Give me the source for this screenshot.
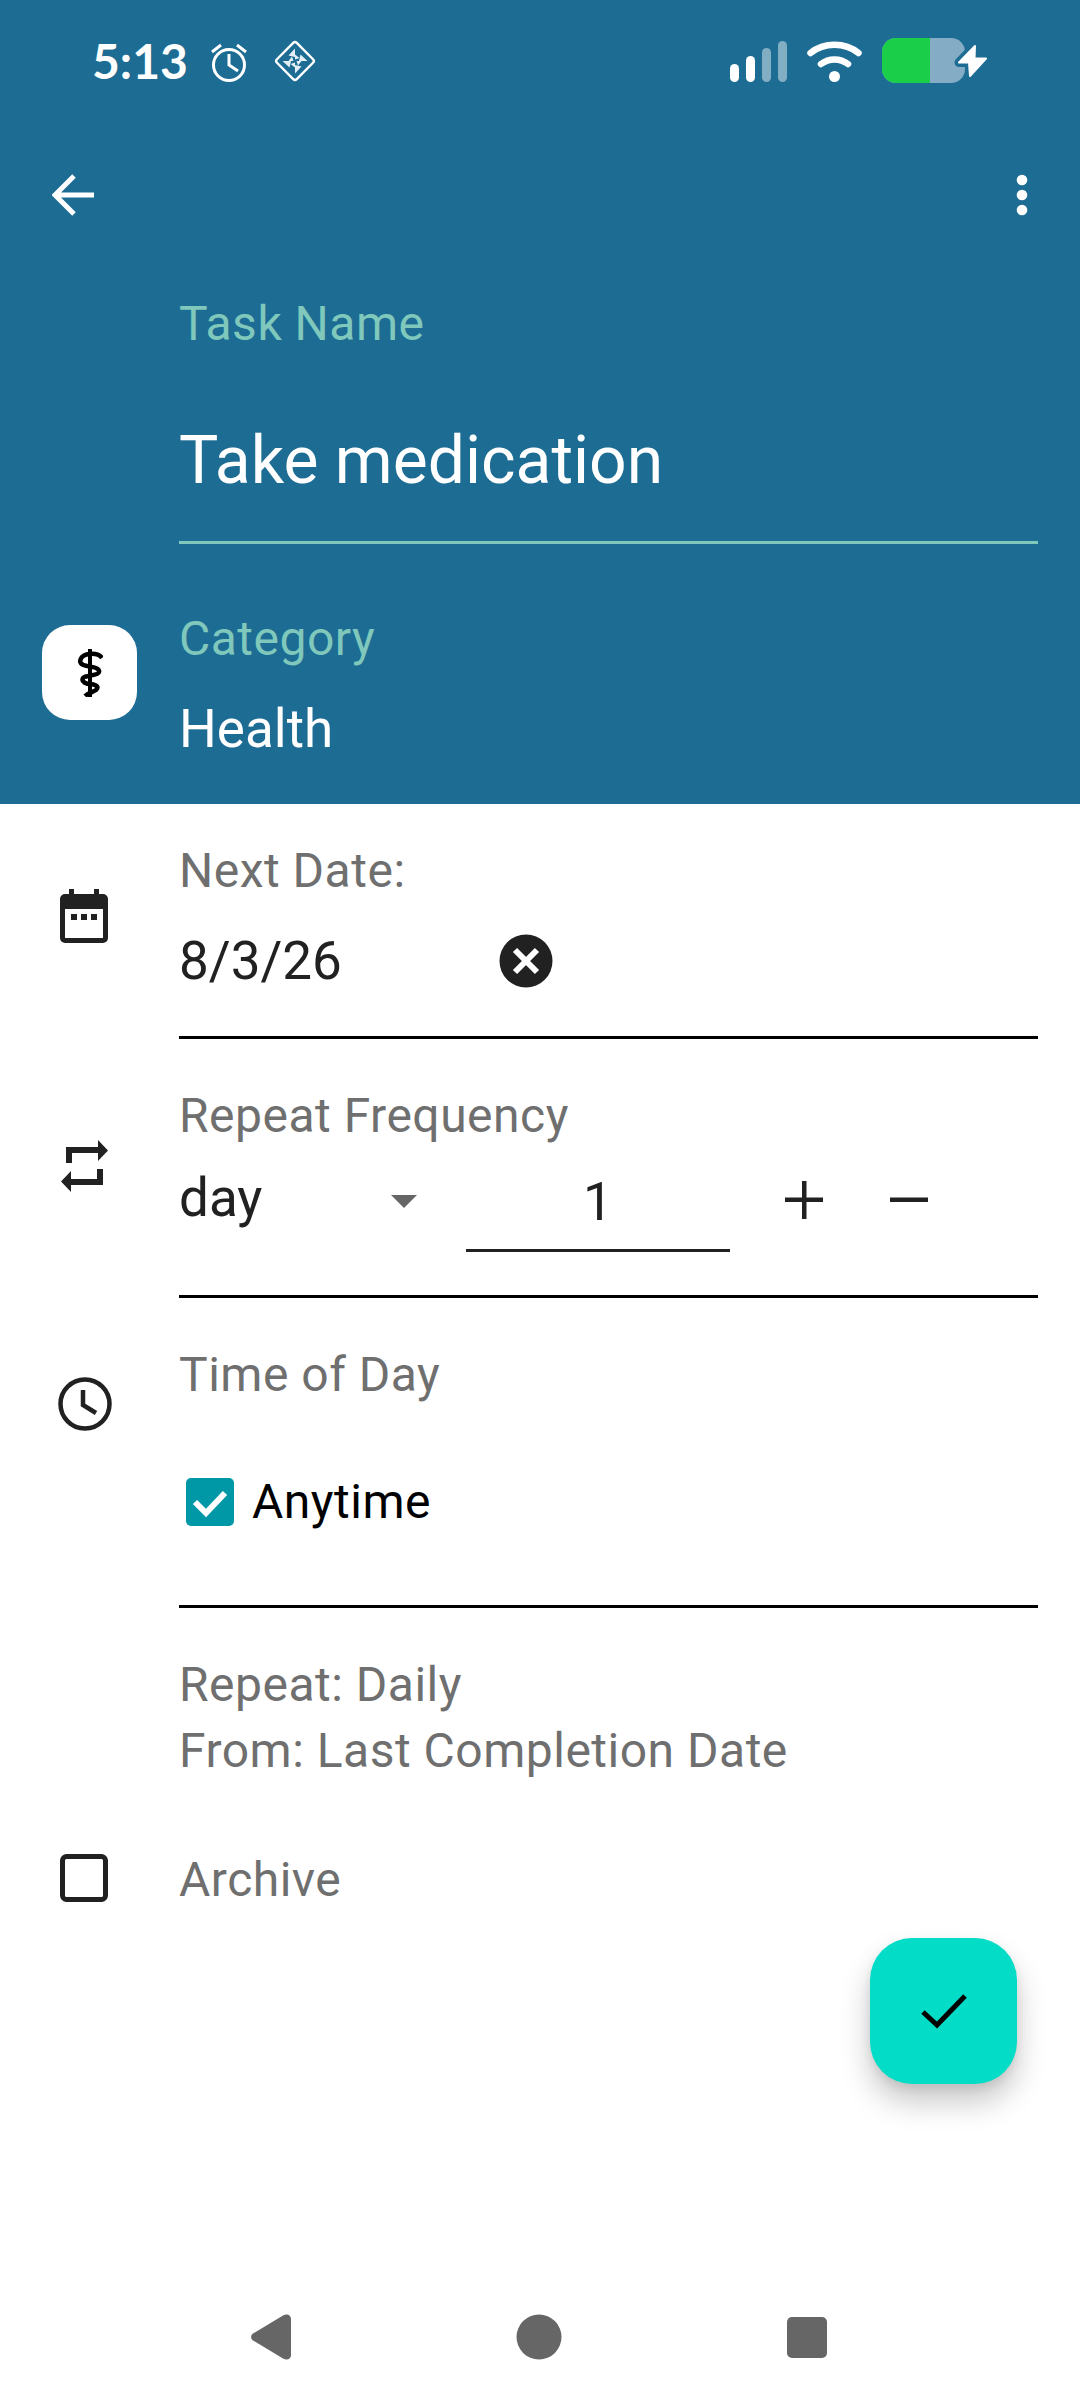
<div class="page">
  <header class="top">
    <div class="status">
      <span class="time">5:13</span>
      <svg class="alarm" width="38" height="40" viewBox="0 0 38 40" fill="none" stroke="#fff" stroke-width="3"><circle cx="19" cy="23" r="15.5"/><path d="M19 12v11l9 6M2 10l9-7M36 10l-9-7" stroke-width="3"/></svg>
      <svg class="diamond" width="42" height="42" viewBox="0 0 42 42"><rect x="7" y="7" width="28" height="28" rx="2.500" transform="rotate(45 21 21)" fill="none" stroke="#fff" stroke-width="2.400"/><g fill="#e4eff5"><path d="M21 8.500V17L14.500 15.500zM21 19.500V14.500L25.500 18z"/><path d="M33.500 21H25L26.500 14.500zM22.500 21H27.500L24 25.500z"/><path d="M21 33.500V25L27.500 26.500zM21 22.500V27.500L16.500 24z"/><path d="M8.500 21H17L15.500 27.500zM19.500 21H14.500L18 16.500z"/></g></svg>
      <span class="spacer"></span>
      <svg class="signal" width="57" height="41" viewBox="0 0 57 41" fill="#fff"><rect x="0" y="23" width="9" height="18" rx="4.500"/><rect x="16" y="15" width="9" height="26" rx="4.500"/><rect x="32" y="7" width="9" height="34" rx="4.500" opacity=".45"/><rect x="48" y="0" width="9" height="41" rx="4.500" opacity=".45"/></svg>
      <svg class="wifi" width="55" height="41" viewBox="0 0 55 41" fill="none" stroke="#fff" stroke-width="6.500" stroke-linecap="round"><path d="M3.500 12C17 1 38 1 51.500 12"/><path d="M14 23C22 17 33 17 41 23"/><circle cx="27.500" cy="35.500" r="5.500" fill="#fff" stroke="none"/></svg>
      <svg class="battery" width="105" height="46" viewBox="0 0 105 46"><rect width="83" height="45" rx="14" fill="#84adc5"/><path d="M48 0H14A14 14 0 0 0 0 14V31A14 14 0 0 0 14 45H48z" fill="#1ace4a"/><path d="M93 8L77 24.500H87L88 38L104 20.500H92.500z" fill="#1d6c94" stroke="#1d6c94" stroke-width="9" stroke-linejoin="round"/><path d="M93 8L77 24.500H87L88 38L104 20.500H92.500z" fill="#fff" stroke="#fff" stroke-width="2" stroke-linejoin="round"/></svg>
    </div>
    <div class="toolbar">
      <svg width="42" height="42" viewBox="0 0 42 42" fill="none" stroke="#fff" stroke-width="5"><path d="M42 21H4M22 2L3 21l19 19"/></svg>
      <svg width="12" height="42" viewBox="0 0 12 42" fill="#fff"><circle cx="6" cy="6" r="5.300"/><circle cx="6" cy="21" r="5.300"/><circle cx="6" cy="36" r="5.300"/></svg>
    </div>
    <div class="namefield">
      <div class="tlabel">Task Name</div>
      <div class="tname">Take medication</div>
    </div>
    <div class="cat">
      <div class="tile">
        <svg width="26" height="48" viewBox="0 0 26 48" fill="none" stroke="#000" stroke-width="4.500"><path d="M13 0V48" stroke-width="4"/><path d="M25 9C21 3 9 4 5 8C1 13 4 16 10 17C16 18 23 19 22 23C21 27 9 26 6 29C4 33 9 35 14 35C20 36 22 38 19 41C16 43 11 44 8 47"/></svg>
      </div>
      <div>
        <div class="tlabel catl">Category</div>
        <div class="catv">Health</div>
      </div>
    </div>
  </header>

  <section class="row r1">
    <div class="ic"><svg class="i-cal" width="48" height="54" viewBox="0 0 48 54" fill="#212121"><path fill-rule="evenodd" d="M9 0h5v5h20V0h5v5h4a5 5 0 0 1 5 5v39a5 5 0 0 1-5 5H5a5 5 0 0 1-5-5V10a5 5 0 0 1 5-5h4zM5 20v29h38V20z"/><rect x="11" y="25" width="6" height="6"/><rect x="21" y="25" width="6" height="6"/><rect x="31" y="25" width="6" height="6"/></svg></div>
    <div class="body b1">
      <div class="label">Next Date:</div>
      <div class="dateline">
        <span class="value datev">8/3/26</span>
        <svg width="54" height="54" viewBox="0 0 54 54"><circle cx="27" cy="27" r="26.500" fill="#212121"/><path d="M16 16L38 38M38 16L16 38" stroke="#fff" stroke-width="6"/></svg>
      </div>
    </div>
  </section>

  <section class="row r2">
    <div class="ic"><svg class="i-rep" width="47" height="52" viewBox="0 0 47 52" fill="#212121"><path d="M5 7h32V0l10 10.500L37 21v-8H11v10H5zM42 29v16H10v7L0 41.500 10 31v8h26V29z"/></svg></div>
    <div class="body b2">
      <div class="label">Repeat Frequency</div>
      <div class="freq">
        <div class="select"><span class="value">day</span><i class="caret"></i></div>
        <div class="num">1</div>
        <svg class="plus" width="38" height="38" viewBox="0 0 38 38" fill="#212121"><path d="M17 0h4.500v16.500H38v4.500H21.500V38H17V21H0v-4.500h17z"/></svg>
        <svg class="minus" width="38" height="38" viewBox="0 0 38 38" fill="#212121"><rect y="16.500" width="38" height="4.500"/></svg>
      </div>
    </div>
  </section>

  <section class="row r3">
    <div class="ic"><svg class="i-clock" width="54" height="54" viewBox="0 0 54 54" fill="none" stroke="#212121" stroke-width="4.500"><circle cx="27" cy="27" r="24.500"/><path d="M25 13v15l13 8"/></svg></div>
    <div class="body b3">
      <div class="label">Time of Day</div>
      <div class="any">
        <svg width="48" height="48" viewBox="0 0 48 48"><rect width="48" height="48" rx="5" fill="#0097a7"/><path d="M9 24l11 11 19-20" fill="none" stroke="#fff" stroke-width="6"/></svg>
        <span class="anyt">Anytime</span>
      </div>
    </div>
  </section>

  <section class="summary">
    <div>Repeat: Daily</div>
    <div>From: Last Completion Date</div>
  </section>

  <section class="archive">
    <svg width="48" height="48" viewBox="0 0 48 48"><rect x="2.500" y="2.500" width="43" height="43" rx="4" fill="none" stroke="#212121" stroke-width="5"/></svg>
    <span class="label">Archive</span>
  </section>

  <button class="fab" aria-label="Save">
    <svg width="46" height="36" viewBox="0 0 46 36" fill="none" stroke="#000" stroke-width="5"><path d="M2 19l14 13L44 3"/></svg>
  </button>

  <nav class="nav">
    <svg width="40" height="46" viewBox="0 0 40 46" fill="#666"><path d="M2 19.500L32 1.500C36 -1 40 1 40 5V41C40 45 36 47 32 44.500L2 26.500C-.5 25 -.5 21 2 19.500Z"/></svg>
    <svg width="46" height="46" viewBox="0 0 46 46" fill="#666"><circle cx="23" cy="23" r="22.500"/></svg>
    <svg width="40" height="41" viewBox="0 0 40 41" fill="#666"><rect width="40" height="41" rx="5"/></svg>
  </nav>
</div>

<style>
  :global(body) { margin: 0; background: #fff; }
  .page { position: relative; width: 1080px; height: 2400px; overflow: hidden; display: flex; flex-direction: column; font-family: Roboto, "Liberation Sans", sans-serif; color: #212121; background: #fff; }
  .top { background: #1d6c94; height: 804px; box-sizing: border-box; color: #fff; flex: none; }
  .status { height: 122px; display: flex; align-items: center; padding-left: 92px; padding-right: 93px; box-sizing: border-box; }
  .time { font-size: 48px; font-weight: 700; line-height: 60px; width: 118px; color: #fff; font-family: Lato, Roboto, sans-serif; }
  .alarm { margin-top: 2px; }
  .diamond { margin-left: 26px; }
  .spacer { flex: 1; }
  .signal { margin-top: 1px; }
  .wifi { margin-left: 20px; margin-top: 1px; }
  .battery { margin-left: 20px; margin-top: 0; }
  .toolbar { height: 145px; display: flex; align-items: center; justify-content: space-between; padding: 0 52px; box-sizing: border-box; }
  .namefield { margin: 27px 42px 0 179px; border-bottom: 3px solid #7fc8bb; padding-bottom: 40px; }
  .tlabel { color: #7fc8bb; font-size: 48px; line-height: 60px; letter-spacing: .5px; }
  .tname { margin-top: 67px; font-size: 66px; line-height: 80px; color: #fff; }
  .cat { display: flex; gap: 42px; padding-left: 42px; margin-top: 65px; }
  .tile { margin-top: 16px; width: 95px; height: 95px; border-radius: 28px; background: #fff; display: flex; align-items: center; justify-content: center; }
  .catv { margin-top: 30px; font-size: 53px; line-height: 60px; color: #fff; }
  .row { display: flex; flex: none; }
  .ic { width: 179px; flex: none; box-sizing: border-box; padding-left: 60px; }
  .ic svg { display: block; }
  .i-cal { margin-top: 85px; }
  .i-rep { margin-top: 54px; margin-left: 1px; }
  .i-clock { margin-top: 32px; margin-left: -2px; }
  .body { flex: 1; margin-right: 42px; border-bottom: 3px solid #000; }
  .label { color: #6f6f6f; font-size: 48px; line-height: 60px; letter-spacing: .5px; }
  .value { font-size: 53px; line-height: 70px; color: #212121; }
  .b1 { padding-top: 37px; padding-bottom: 40px; }
  .dateline { display: flex; align-items: center; margin-top: 25px; height: 70px; }
  .datev { width: 320px; }
  .r2 { margin-top: 47px; }
  .b2 { padding-bottom: 42px; }
  .freq { display: flex; margin-top: 17px; height: 90px; }
  .select { width: 287px; display: flex; justify-content: space-between; height: 70px; box-sizing: border-box; padding-right: 49px; flex: none; }
  .caret { margin-top: 32px; width: 0; height: 0; border-left: 13px solid transparent; border-right: 13px solid transparent; border-top: 13px solid #666; }
  .num { width: 264px; height: 89px; box-sizing: border-box; border-bottom: 3px solid #212121; text-align: center; font-size: 53px; line-height: 78px; flex: none; }
  .plus { margin-left: 55px; margin-top: 18px; }
  .minus { margin-left: 67px; margin-top: 18px; }
  .r3 { margin-top: 47px; }
  .b3 { padding-bottom: 73px; }
  .any { display: flex; align-items: center; margin-top: 67px; height: 60px; padding-left: 7px; gap: 18px; }
  .anyt { color: #000; font-size: 48px; line-height: 60px; letter-spacing: .5px; }
  .summary { margin: 44px 42px 0 179px; color: #6f6f6f; font-size: 48px; line-height: 66px; letter-spacing: .5px; flex: none; }
  .archive { display: flex; align-items: center; padding-left: 60px; margin-top: 66px; height: 60px; gap: 71px; flex: none; }
  .archive svg { margin-top: -4px; }
  .fab { position: absolute; left: 870px; top: 1938px; width: 147px; height: 146px; border: 0; padding: 0; border-radius: 42px; background: #03dcc6; box-shadow: 0 18px 30px rgba(0,0,0,.22), 0 4px 10px rgba(0,0,0,.08); display: flex; align-items: center; justify-content: center; }
  .nav { margin-top: auto; padding: 0 253px 40px 251px; display: flex; justify-content: space-between; align-items: center; height: 46px; }
</style>
